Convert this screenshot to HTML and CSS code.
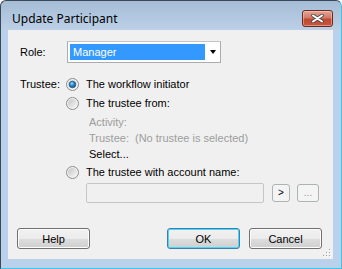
FILE: index.html
```html
<!DOCTYPE html>
<html>
<head>
<meta charset="utf-8">
<link rel="stylesheet" href="styles.css">
</head>
<body>
<div class="window">
  <div class="titlebar">
    <span class="title">Update Participant</span>
    <button class="close" type="button" aria-label="Close">
      <svg width="13" height="9" viewBox="0 0 13 9">
        <path d="M2 1.5 L11 7.5 M11 1.5 L2 7.5" stroke="#4a4a4a" stroke-width="3.6" stroke-linecap="round"/>
        <path d="M2 1.5 L11 7.5 M11 1.5 L2 7.5" stroke="#ffffff" stroke-width="2" stroke-linecap="round"/>
      </svg>
    </button>
  </div>
  <div class="client">
    <div class="form">
      <div class="row role-row">
        <span class="label">Role:</span>
        <div class="combo">
          <span class="combo-value">Manager</span>
          <span class="combo-arrow"></span>
        </div>
      </div>
      <div class="row trustee-row">
        <span class="label label-trustee">Trustee:</span>
        <div class="options">
          <div class="opt">
            <svg class="radio" width="13" height="13" viewBox="0 0 13 13">
              <defs>
                <linearGradient id="rb" x1="0" y1="0" x2="1" y2="1">
                  <stop offset="0" stop-color="#c8c8c8"/>
                  <stop offset="1" stop-color="#fbfbfb"/>
                </linearGradient>
                <radialGradient id="dot" cx="0.4" cy="0.35" r="0.7">
                  <stop offset="0" stop-color="#9fe0fb"/>
                  <stop offset="0.45" stop-color="#2b8bd1"/>
                  <stop offset="1" stop-color="#0f4c86"/>
                </radialGradient>
              </defs>
              <circle cx="6.5" cy="6.5" r="6" fill="#f4f4f4" stroke="#8a8a8a"/>
              <circle cx="6.5" cy="6.5" r="4.6" fill="url(#rb)"/>
              <circle cx="6.5" cy="6.5" r="3.3" fill="url(#dot)" stroke="#1b4f80" stroke-width="0.7"/>
            </svg>
            <span>The workflow initiator</span>
          </div>
          <div class="opt">
            <svg class="radio" width="13" height="13" viewBox="0 0 13 13">
              <defs>
                <linearGradient id="rb2" x1="0" y1="0" x2="1" y2="1">
                  <stop offset="0" stop-color="#c4c4c4"/>
                  <stop offset="1" stop-color="#f8f8f8"/>
                </linearGradient>
              </defs>
              <circle cx="6.5" cy="6.5" r="6" fill="#f4f4f4" stroke="#8a8a8a"/>
              <circle cx="6.5" cy="6.5" r="4.6" fill="url(#rb2)"/>
            </svg>
            <span>The trustee from:</span>
          </div>
          <div class="sub">
            <div class="sub-line disabled">Activity:</div>
            <div class="sub-line disabled"><span class="sub-key">Trustee:</span><span>(No trustee is selected)</span></div>
            <div class="sub-line">Select...</div>
          </div>
          <div class="opt opt-last">
            <svg class="radio" width="13" height="13" viewBox="0 0 13 13">
              <circle cx="6.5" cy="6.5" r="6" fill="#f4f4f4" stroke="#8a8a8a"/>
              <circle cx="6.5" cy="6.5" r="4.6" fill="url(#rb2)"/>
            </svg>
            <span>The trustee with account name:</span>
          </div>
          <div class="account">
            <div class="textbox"></div>
            <button class="small small-go" type="button">&gt;</button>
            <button class="small small-more" type="button">...</button>
          </div>
        </div>
      </div>
    </div>
    <div class="footer">
      <button class="btn" type="button">Help</button>
      <span class="spacer"></span>
      <button class="btn btn-default" type="button">OK</button>
      <button class="btn" type="button">Cancel</button>
    </div>
    <div class="grip">
      <svg width="8" height="8" viewBox="0 0 8 8">
        <rect x="6" y="0" width="1" height="1" fill="#a0a0a0"/>
        <rect x="3" y="3" width="1" height="1" fill="#a0a0a0"/>
        <rect x="6" y="3" width="1" height="1" fill="#a0a0a0"/>
        <rect x="0" y="6" width="1" height="1" fill="#a0a0a0"/>
        <rect x="3" y="6" width="1" height="1" fill="#a0a0a0"/>
        <rect x="6" y="6" width="1" height="1" fill="#a0a0a0"/>
        <rect x="7" y="1" width="1" height="1" fill="#fff"/>
        <rect x="4" y="4" width="1" height="1" fill="#fff"/>
        <rect x="7" y="4" width="1" height="1" fill="#fff"/>
        <rect x="1" y="7" width="1" height="1" fill="#fff"/>
        <rect x="4" y="7" width="1" height="1" fill="#fff"/>
        <rect x="7" y="7" width="1" height="1" fill="#fff"/>
      </svg>
    </div>
  </div>
</div>
</body>
</html>
```

FILE: styles.css
```css
html, body {
  margin: 0;
  padding: 0;
  background: #ffffff;
}

.window {
  width: 342px;
  height: 269px;
  box-sizing: border-box;
  border: 1px solid #3b4657;
  border-right-color: #3cc4ea;
  border-bottom-color: #3cc4ea;
  border-radius: 6px 6px 0 0;
  background: linear-gradient(#a6bdd7 0px, #bcd0e7 29px, #b9d1ea 30px, #b9d1ea 100%);
  display: flex;
  flex-direction: column;
  font-family: "Liberation Sans", Arial, sans-serif;
  font-size: 11px;
  color: #000;
}

.titlebar {
  height: 29px;
  display: flex;
  align-items: flex-start;
  padding-left: 11px;
  padding-right: 8px;
  box-sizing: border-box;
}

.title {
  font-family: "Noto Sans", "Open Sans", sans-serif;
  font-size: 12px;
  line-height: 16px;
  margin-top: 10px;
  color: #000;
}

.close {
  margin-left: auto;
  margin-top: 9px;
  width: 31px;
  height: 17px;
  padding: 0;
  border: 1px solid #6b2a20;
  border-radius: 3px;
  background: linear-gradient(#e3a597 0%, #d27a66 45%, #c04a30 55%, #c9553a 100%);
  box-shadow: inset 0 0 0 1px rgba(255, 220, 210, 0.45);
  display: flex;
  align-items: center;
  justify-content: center;
}

.close svg {
  display: block;
}

.client {
  flex: 1;
  margin: 0 8px 9px 7px;
  background: #f0f0f0;
  display: flex;
  flex-direction: column;
  position: relative;
}

.form {
  padding: 11px 0 0 12px;
}

.row {
  display: flex;
}

.label {
  width: 46px;
  flex: none;
}

.role-row {
  align-items: center;
}

.combo {
  margin-left: 1px;
  width: 154px;
  height: 22px;
  box-sizing: border-box;
  border: 1px solid #acacac;
  border-top-color: #c4c4c4;
  background: #ffffff;
  padding: 2px;
  display: flex;
  align-items: center;
}

.combo-value {
  width: 135px;
  height: 16px;
  background: #3399ff;
  color: #ffffff;
  line-height: 16px;
  padding-left: 3px;
  box-sizing: border-box;
}

.combo-arrow {
  margin-left: 5px;
  width: 0;
  height: 0;
  border-left: 3.5px solid transparent;
  border-right: 3.5px solid transparent;
  border-top: 4px solid #000;
}

.trustee-row {
  margin-top: 12px;
}

.label-trustee {
  line-height: 19px;
}

.options {
  display: flex;
  flex-direction: column;
}

.opt {
  height: 19px;
  display: flex;
  align-items: center;
  gap: 7px;
  line-height: 19px;
}

.opt-last {
  margin-top: 1px;
}

.radio {
  display: block;
  flex: none;
}

.sub {
  padding-left: 23px;
  padding-top: 1px;
}

.sub-line {
  height: 16px;
  line-height: 16px;
}

.disabled {
  color: #9d9d9d;
}

.sub-key {
  display: inline-block;
  width: 46px;
}

.account {
  margin-top: 1px;
  padding-left: 20px;
  display: flex;
  align-items: center;
}

.textbox {
  width: 178px;
  height: 20px;
  box-sizing: border-box;
  border: 1px solid #c6c6c6;
  border-radius: 2px;
  background: #f0f0f0;
}

.small {
  height: 18px;
  box-sizing: border-box;
  border: 1px solid #adb2b5;
  border-radius: 3px;
  background: #f4f4f4;
  padding: 0;
  font-family: "Liberation Sans", Arial, sans-serif;
  font-size: 10px;
  line-height: 14px;
  color: #000;
}

.small-go {
  width: 18px;
  margin-left: 8px;
}

.small-more {
  width: 22px;
  margin-left: 7px;
  color: #a0a0a0;
}

.footer {
  margin-top: auto;
  display: flex;
  padding: 0 11px 10px 9px;
  gap: 9px;
}

.spacer {
  flex: 1;
}

.btn {
  width: 73px;
  height: 21px;
  box-sizing: border-box;
  border: 1px solid #707070;
  border-radius: 3px;
  background: linear-gradient(#f2f2f2 0%, #ebebeb 50%, #dddddd 51%, #cfcfcf 100%);
  box-shadow: inset 0 0 0 1px #fcfcfc;
  font-family: "Liberation Sans", Arial, sans-serif;
  font-size: 11px;
  color: #000;
  padding: 0;
}

.btn-default {
  border-color: #3c7fb1;
  box-shadow: inset 0 0 0 1px #48d7f7;
}

.grip {
  position: absolute;
  right: 2px;
  bottom: 2px;
  width: 8px;
  height: 8px;
}

.grip svg {
  display: block;
}
```
